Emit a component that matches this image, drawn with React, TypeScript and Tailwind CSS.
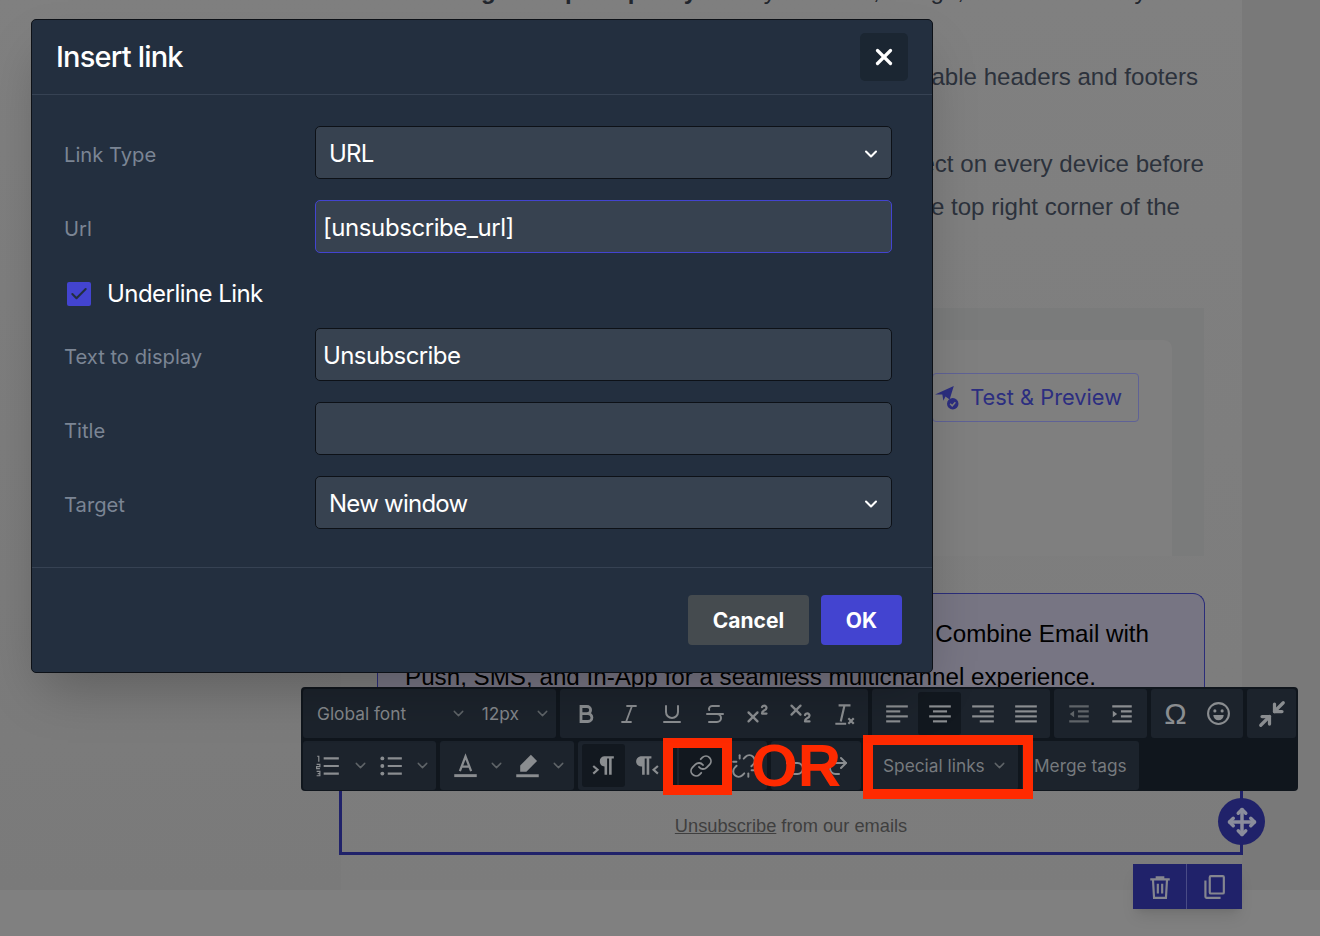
import { ChevronDown, X, Italic, Underline, Strikethrough, Superscript, Subscript, Minimize2, Link, Unlink, Undo2, Redo2, Move, Check } from 'lucide-react';
import type { ReactNode } from 'react';

const sans = "font-['Inter','Liberation_Sans',sans-serif]";
const helv = "font-['Liberation_Sans',Arial,sans-serif]";

function Field({ label, children }: { label: string; children: ReactNode }) {
  return (
    <div className="flex h-[53px] items-center">
      <div className="w-[283px] pl-[32px] pt-[5px] text-[20.2px] text-[#7b8594]">{label}</div>
      {children}
    </div>
  );
}

function Input({ value, focused }: { value?: string; focused?: boolean }) {
  return (
    <div className={`flex h-[53px] w-[577px] items-center rounded-[5px] border bg-[#374250] pl-[7px] pt-[3px] text-[24px] text-white ${focused ? 'border-[#4344d0] tracking-[-0.42px]' : 'border-[#0d1117] tracking-[-0.6px]'}`}>
      {value}
    </div>
  );
}

function Select({ value }: { value: string }) {
  return (
    <div className="flex h-[53px] w-[577px] items-center justify-between rounded-[5px] border border-[#0d1117] bg-[#374250] pl-[13px] pr-[10px] pt-[2px] text-[24px] tracking-[-0.75px] text-white">
      {value}
      <ChevronDown className="h-[20px] w-[20px]" strokeWidth={2.5} />
    </div>
  );
}

function Tool({ children, active }: { children: ReactNode; active?: boolean }) {
  return (
    <div className={`flex h-[43px] w-[43px] shrink-0 items-center justify-center rounded-[3px] text-[#8a8d90] ${active ? 'bg-[#12181f]' : ''}`}>
      {children}
    </div>
  );
}

function Group({ children, className }: { children: ReactNode; className?: string }) {
  return <div className={`flex h-[49px] shrink-0 items-center rounded-[3px] bg-[#1c232c] ${className ?? ''}`}>{children}</div>;
}

function Bars({ rows }: { rows: [number, number][] }) {
  return (
    <svg viewBox="0 0 24 24" className="h-[26px] w-[26px]" fill="currentColor">
      {rows.map(([x, w], i) => (
        <rect key={i} x={x} y={4 + i * 4.6} width={w} height={2} />
      ))}
    </svg>
  );
}

function Pilcrow({ rtl }: { rtl?: boolean }) {
  return (
    <svg viewBox="0 0 24 24" className="h-[26px] w-[26px]" fill="currentColor">
      {rtl ? (
        <>
          <path d="M7 3h10v2h-2v15h-2.4V5h-1.8v15H8.4v-7.5A4.8 4.8 0 0 1 7 3z" />
          <path d="M23 12l-4 3.5 4 3.5" fill="none" stroke="currentColor" strokeWidth="2" />
        </>
      ) : (
        <>
          <path d="M13 3h9v2h-2v15h-2.4V5h-1.8v15h-2.4v-7.5A4.8 4.8 0 0 1 13 3z" />
          <path d="M3 12l4 3.5-4 3.5" fill="none" stroke="currentColor" strokeWidth="2" />
        </>
      )}
    </svg>
  );
}

const ic = 'h-[24px] w-[24px]';
const chev = 'h-[17px] w-[17px] shrink-0 text-[#5f6468]';

export default function App() {
  return (
    <div className={`relative h-[936px] w-[1320px] overflow-hidden bg-[#7a7a7a] ${sans}`}>
      {/* page behind the overlay */}
      <div className="flex h-[890px]">
        <div className="w-[341px] bg-gradient-to-b from-[#808080] to-[#7a7a7a]" />
        <div className={`flex w-[901px] flex-col bg-gradient-to-b from-[#808080] to-[#7c7c7c] ${helv}`}>
          <div className="-mt-[27px] h-[83px] whitespace-nowrap pl-[100px] text-[24px] leading-[36px] text-[#23272e]">
            <b>Drag &amp; drop simplicity:</b> Easily combine, design, and resize every block
          </div>
          <div className="pt-[3px] pr-[44px] text-right text-[24.1px] leading-[36px] text-[#2c323c]">Customizable headers and footers</div>
          <div className="mt-[47px] pr-[38px] text-right text-[24.1px] leading-[43px] text-[#2c323c]">Preview your content and see it perfect on every device before</div>
          <div className="pr-[62px] text-right text-[24.1px] leading-[43px] text-[#2c323c]">sending by clicking the button in the top right corner of the</div>
          <div className="mt-[80px] ml-[591px] h-[248px] w-[272px] bg-[#7a7b7b] pt-[32px]">
            <div className={`h-[216px] w-[240px] rounded-tr-[8px] bg-[#7f7f7f] pt-[33px] ${sans}`}>
              <div className="flex h-[49px] w-[207px] items-center justify-end whitespace-nowrap rounded-[4px] border border-[#5f6296] pr-[16px] text-[21.8px] text-[#2c2e80]">
                <svg viewBox="0 0 24 24" className="mr-[11px] h-[25px] w-[25px] shrink-0" fill="currentColor">
                  <path d="M1 9 19 1l-4 13-4-3-2 4-1-6z" />
                  <circle cx="18" cy="18" r="5.5" />
                  <path d="m15.5 18 2 2 3-3.5" fill="none" stroke="#7f7f7f" strokeWidth="1.4" />
                </svg>
                Test &amp; Preview
              </div>
            </div>
          </div>
          <div className="mt-[37px] ml-[36px] h-[96px] w-[828px] rounded-t-[12px] border border-b-0 border-[#2b2d7a] bg-[#777583] pl-[27px] pt-[18px] text-[24.2px] leading-[43px] text-black">
            <div className="pr-[55px] text-right">Combine Email with</div>
            <div>Push, SMS, and In-App for a seamless multichannel experience.</div>
          </div>
        </div>
        <div className="flex-1 bg-[#797979]" />
      </div>
      <div className="h-[46px] bg-[#808080]" />

      {/* selected footer block */}
      <div className={`absolute left-[339px] top-[785px] flex h-[70px] w-[904px] items-center justify-center border-[3px] border-[#20226a] pt-[12px] text-[18.25px] text-[#3f3f3f] ${helv}`}>
        <span><span className="underline">Unsubscribe</span> from our emails</span>
      </div>
      <div className="absolute left-[1218px] top-[798px] flex h-[47px] w-[47px] items-center justify-center rounded-full bg-[#20226a] text-[#8a8d9c]">
        <Move className="h-[30px] w-[30px]" strokeWidth={2.8} />
      </div>
      <div className="absolute left-[1133px] top-[864px] flex h-[45px] w-[109px] bg-[#20226a] text-[#85868f] shadow-lg">
        <div className="flex w-[54px] items-center justify-center border-r border-[#4a4c86]">
          <svg viewBox="0 0 24 24" className="h-[26px] w-[26px]" fill="none" stroke="currentColor" strokeWidth="2">
            <path d="M3 5h18M9 5V3h6v2M5.5 5l1 17h11l1-17M10 9v9M14 9v9" />
          </svg>
        </div>
        <div className="flex flex-1 items-center justify-center pr-[3px]">
          <svg viewBox="0 0 24 24" className="h-[26px] w-[26px]" fill="none" stroke="currentColor" strokeWidth="2">
            <rect x="9" y="2" width="13" height="16" rx="1" />
            <path d="M5 6v15a1 1 0 0 0 1 1h13" />
          </svg>
        </div>
      </div>

      {/* editor toolbar */}
      <div className="absolute left-[301px] top-[687px] h-[104px] w-[997px] rounded-[4px] bg-[#10161d] px-[2px] pt-[2px]">
        <div className="flex gap-[4px]">
          <Group className="w-[253px] justify-between pl-[14px] pr-[5px] text-[17.3px] text-[#83868a]">
            <span>Global font</span>
            <div className="flex items-center gap-[15px]">
              <ChevronDown className={chev} />
              <span>12px</span>
              <ChevronDown className={chev} />
            </div>
          </Group>
          <Group className="w-[308px] pl-[4px]">
            <Tool>
              <svg viewBox="0 0 24 24" className={ic} fill="none" stroke="currentColor" strokeWidth="2.8">
                <path d="M7 4.5h6a3.6 3.6 0 0 1 0 7.2H7zm0 7.2h7a3.9 3.9 0 0 1 0 7.8H7z" />
              </svg>
            </Tool>
            <Tool><Italic className={ic} strokeWidth={1.8} /></Tool>
            <Tool><Underline className={ic} /></Tool>
            <Tool><Strikethrough className={ic} /></Tool>
            <Tool><Superscript className="h-[27px] w-[27px]" /></Tool>
            <Tool><Subscript className="h-[27px] w-[27px]" /></Tool>
            <Tool>
              <svg viewBox="0 0 24 24" className="h-[26px] w-[26px]" fill="none" stroke="currentColor" strokeWidth="2">
                <path d="M7 4h11M12.5 4 9 19M4 21h10M16 16l5 5M21 16l-5 5" />
              </svg>
            </Tool>
          </Group>
          <Group className="w-[178px] pl-[3px]">
            <Tool><Bars rows={[[2, 20], [2, 13], [2, 20], [2, 13]]} /></Tool>
            <Tool active><Bars rows={[[2, 20], [5.5, 13], [2, 20], [5.5, 13]]} /></Tool>
            <Tool><Bars rows={[[2, 20], [9, 13], [2, 20], [9, 13]]} /></Tool>
            <Tool><Bars rows={[[2, 20], [2, 20], [2, 20], [2, 20]]} /></Tool>
          </Group>
          <Group className="w-[93px] pl-[3px]">
            <Tool>
              <svg viewBox="0 0 24 24" className="h-[26px] w-[26px] text-[#5f6468]" fill="currentColor">
                <path d="M3 4h18v2H3zM11 8.6h10v2H11zM11 13.2h10v2H11zM3 17.8h18v2H3zM7.5 9l-4 3 4 3z" />
              </svg>
            </Tool>
            <Tool>
              <svg viewBox="0 0 24 24" className="h-[26px] w-[26px]" fill="currentColor">
                <path d="M3 4h18v2H3zM11 8.6h10v2H11zM11 13.2h10v2H11zM3 17.8h18v2H3zM3.5 9l4 3-4 3z" />
              </svg>
            </Tool>
          </Group>
          <Group className="w-[92px] pl-[3px]">
            <Tool><span className={`text-[30px] leading-none ${helv}`}>Ω</span></Tool>
            <Tool>
              <svg viewBox="0 0 24 24" className="h-[25px] w-[25px]" fill="none" stroke="currentColor" strokeWidth="2">
                <circle cx="12" cy="12" r="10" />
                <circle cx="8.5" cy="9.5" r="1.5" fill="currentColor" stroke="none" />
                <circle cx="15.5" cy="9.5" r="1.5" fill="currentColor" stroke="none" />
                <path d="M7 13.5h10a5 5 0 0 1-10 0z" fill="currentColor" stroke="none" />
              </svg>
            </Tool>
          </Group>
          <Group className="w-[49px] justify-center">
            <Minimize2 className="h-[30px] w-[30px] text-[#8a8d90]" strokeWidth={2.6} />
          </Group>
        </div>
        <div className="mt-[3px] flex gap-[4px]">
          <Group className="w-[133px] pl-[3px]">
            <Tool>
              <svg viewBox="0 0 24 24" className="h-[26px] w-[26px]" fill="none" stroke="currentColor">
                <path d="M8 5h14M8 12h14M8 19h14" strokeWidth="2" />
                <path d="M2 3h1.5v5M1.5 10.5h3v2h-3v2h3M1.5 17h3v2h-2 2v2h-3" strokeWidth="1.1" />
              </svg>
            </Tool>
            <ChevronDown className={`${chev} ml-[3px]`} />
            <Tool>
              <svg viewBox="0 0 24 24" className="h-[26px] w-[26px]" fill="currentColor">
                <circle cx="4" cy="5" r="1.8" />
                <circle cx="4" cy="12" r="1.8" />
                <circle cx="4" cy="19" r="1.8" />
                <path d="M9 4h13v2H9zM9 11h13v2H9zM9 18h13v2H9z" />
              </svg>
            </Tool>
            <ChevronDown className={`${chev} ml-[2px]`} />
          </Group>
          <Group className="w-[134px] pl-[3.5px]">
            <Tool>
              <svg viewBox="0 0 24 24" className="h-[27px] w-[27px]" fill="none" stroke="currentColor">
                <path d="M7 17 12 4l5 13M8.5 13h7" strokeWidth="2" />
                <path d="M2 21h20" strokeWidth="2.6" />
              </svg>
            </Tool>
            <ChevronDown className={`${chev} ml-[1px]`} />
            <Tool>
              <svg viewBox="0 0 24 24" className="ml-[3px] h-[27px] w-[27px]" fill="currentColor">
                <path d="M15 2.5 20.5 8 11 17.5H5.5V12z" />
                <path d="M2 19.8h20v2.6H2z" />
              </svg>
            </Tool>
            <ChevronDown className={`${chev} ml-[2px]`} />
          </Group>
          <Group className="w-[95px] pl-[3.5px]">
            <Tool active><Pilcrow /></Tool>
            <Tool><Pilcrow rtl /></Tool>
          </Group>
          <Group className="w-[90px] pl-[2px]">
            <Tool active><Link className={ic} strokeWidth={1.8} /></Tool>
            <Tool><Unlink className="h-[26px] w-[26px]" strokeWidth={1.8} /></Tool>
          </Group>
          <Group className="w-[90px] pl-[2px]">
            <Tool><Undo2 className={ic} /></Tool>
            <Tool><Redo2 className={ic} /></Tool>
          </Group>
          <Group className="w-[153px] pl-[18px] text-[17.3px] text-[#767a7e]">
            <span>Special links</span>
            <ChevronDown className={`${chev} ml-[6px]`} />
          </Group>
          <Group className="w-[117px] pl-[12px] text-[17.3px] text-[#767a7e]">Merge tags</Group>
        </div>
      </div>

      {/* annotations */}
      <div className="absolute left-[663px] top-[738px] h-[57px] w-[69px] border-[10px] border-[#ff2a00]" />
      <div className="absolute left-[863px] top-[735px] h-[64px] w-[170px] border-[10px] border-[#ff2a00]" />
      <div className={`absolute left-[751px] top-[731px] text-[60px] font-bold leading-[70px] text-[#ff2a00] ${helv}`}>OR</div>

      {/* dialog */}
      <div className="absolute left-[31px] top-[19px] h-[654px] w-[902px] rounded-[5px] border border-[#0d1117] bg-[#232f3f] shadow-2xl">
        <div className="flex h-[75px] items-center justify-between border-b border-[#364253] pl-[24px] pr-[24px]">
          <div className="text-[29px] font-medium tracking-[-0.8px] text-white">Insert link</div>
          <div className="flex h-[48px] w-[48px] items-center justify-center rounded-[5px] bg-[#1b2632] text-white">
            <X className="h-[26px] w-[26px]" strokeWidth={3} />
          </div>
        </div>
        <div className="flex flex-col gap-[21px] pt-[31px]">
          <Field label="Link Type"><Select value="URL" /></Field>
          <Field label="Url"><Input value="[unsubscribe_url]" focused /></Field>
        </div>
        <div className="flex h-[75px] items-center pl-[35px] pt-[6px]">
          <div className="flex h-[24px] w-[24px] items-center justify-center rounded-[2px] bg-[#4344d0] text-[#232f3f]">
            <Check className="h-[20px] w-[20px]" strokeWidth={2.5} />
          </div>
          <span className="ml-[16px] text-[24px] tracking-[-0.55px] text-white">Underline Link</span>
        </div>
        <div className="flex flex-col gap-[21px]">
          <Field label="Text to display"><Input value="Unsubscribe" /></Field>
          <Field label="Title"><Input /></Field>
          <Field label="Target"><Select value="New window" /></Field>
        </div>
        <div className="mt-[38px] flex items-start justify-end gap-[12px] border-t border-[#364253] pr-[30px] pt-[27px] text-[21px] font-bold text-white">
          <div className="flex h-[50px] w-[121px] items-center justify-center rounded-[4px] bg-[#454b4f] pt-[2px]">Cancel</div>
          <div className="flex h-[50px] w-[81px] items-center justify-center rounded-[4px] bg-[#4344d0] pt-[2px]">OK</div>
        </div>
      </div>
    </div>
  );
}
